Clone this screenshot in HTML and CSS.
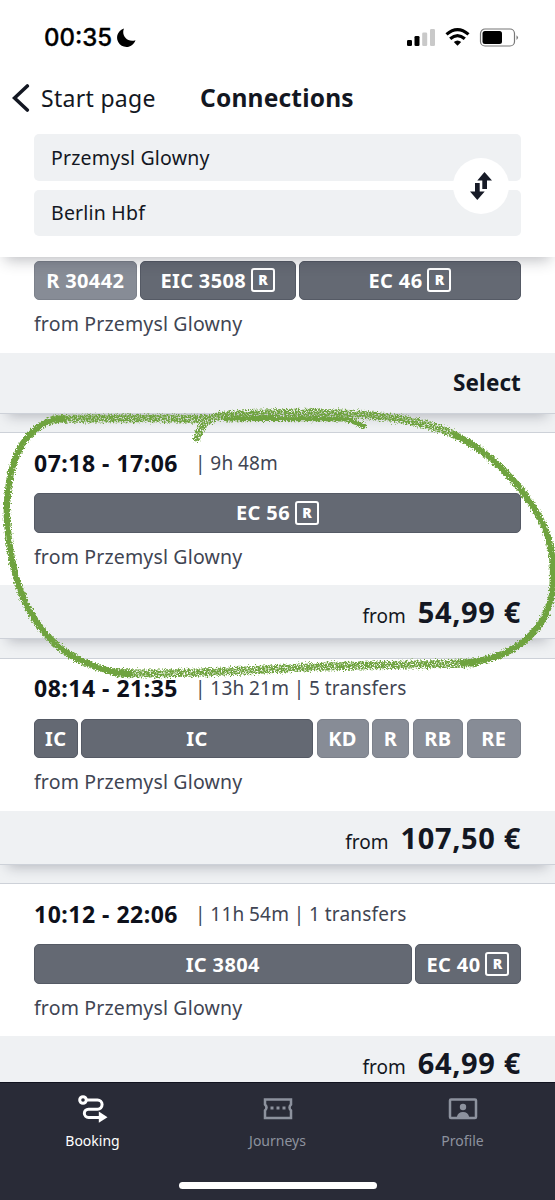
FILE: index.html
```html
<!DOCTYPE html>
<html lang="en">
<head>
<meta charset="utf-8">
<title>Connections</title>
<link rel="stylesheet" href="styles.css">
</head>
<body>
<div class="screen">
  <header class="header">
    <div class="status">
      <span class="clock">00:35</span>
      <svg class="moon" width="19" height="19" viewBox="0 0 19 19"><path d="M7 .5C4 7 10 15 18.500 12.200A9.400 9.400 0 1 1 7 .5Z"/></svg>
      <svg class="indicators" width="112" height="20" viewBox="0 0 112 20">
        <rect x="0" y="12" width="5" height="6" rx="1.300"/><rect x="7.500" y="8" width="5" height="10" rx="1.300"/>
        <rect class="dim" x="15.200" y="4.500" width="5" height="13.500" rx="1.300"/><rect class="dim" x="23" y="1" width="5" height="17" rx="1.300"/>
        <g class="arcs"><path d="M39.500 6.400Q50.500 -3 61.500 6.400"/><path d="M43.200 10.800Q50.500 4.500 57.800 10.800"/></g>
        <path d="M50.500 17.800L46.800 14Q50.500 10.800 54.200 14Z"/>
        <rect class="case" x="73.500" y="1" width="34" height="17" rx="4.500"/><rect x="75.500" y="3" width="19.500" height="13" rx="2.500"/>
        <path class="tip" d="M109.500 7.200Q112.500 9.500 109.500 12Z"/>
      </svg>
    </div>
    <div class="titlebar">
      <svg class="back" width="18" height="28" viewBox="0 0 18 28"><path d="M15.300 2L2.500 14L15.300 26"/></svg>
      <span class="start">Start page</span>
      <h1 class="title">Connections</h1>
    </div>
    <div class="route">
      <div class="field"><span>Przemysl Glowny</span></div>
      <div class="field"><span>Berlin Hbf</span></div>
      <div class="swap"><svg width="22" height="28" viewBox="0 0 22 28"><path d="M14.500 0L22 8.500H17V17H12.300V8.500H7.300ZM5 11H9.700V19.500H14.700L7.300 28L0 19.500H5Z"/></svg></div>
    </div>
  </header>
  <main class="list">
    <section class="card first">
      <div class="segments s1"><div class="seg light">R 30442</div><div class="seg">EIC 3508<b class="res">R</b></div><div class="seg">EC 46<b class="res">R</b></div></div>
      <p class="origin">from Przemysl Glowny</p>
      <div class="footer tall"><span class="select">Select</span></div>
    </section>
    <section class="card">
      <div class="times"><strong>07:18 - 17:06</strong><span>| 9h 48m</span></div>
      <div class="segments s2"><div class="seg">EC 56<b class="res">R</b></div></div>
      <p class="origin">from Przemysl Glowny</p>
      <div class="footer"><span class="from">from</span><span class="price">54,99 €</span></div>
    </section>
    <section class="card">
      <div class="times"><strong>08:14 - 21:35</strong><span>| 13h 21m | 5 transfers</span></div>
      <div class="segments s3"><div class="seg">IC</div><div class="seg">IC</div><div class="seg light">KD</div><div class="seg light">R</div><div class="seg light">RB</div><div class="seg light">RE</div></div>
      <p class="origin">from Przemysl Glowny</p>
      <div class="footer"><span class="from">from</span><span class="price">107,50 €</span></div>
    </section>
    <section class="card">
      <div class="times"><strong>10:12 - 22:06</strong><span>| 11h 54m | 1 transfers</span></div>
      <div class="segments s4"><div class="seg">IC 3804</div><div class="seg">EC 40<b class="res">R</b></div></div>
      <p class="origin">from Przemysl Glowny</p>
      <div class="footer"><span class="from">from</span><span class="price">64,99 €</span></div>
    </section>
  </main>
  <nav class="nav">
    <div class="tabs">
      <div class="tab active"><svg width="30" height="28" viewBox="0 0 30 28"><circle cx="5" cy="5" r="3.300"/><path d="M8.500 5H19.500A4.600 4.600 0 0 1 19.500 14.200H10.500A4 4 0 0 0 10.500 22.500H21"/><path class="solid" d="M20.800 16.500L29.500 22.200L20.800 27.800Z"/></svg><span>Booking</span></div>
      <div class="tab"><svg width="30" height="28" viewBox="0 0 30 28"><path d="M2 4.500H28V9.500Q25 12.500 28 15.500V23H2V15.500Q5 12.500 2 9.500Z"/><path class="dots" d="M7.500 13H10.500M13.500 13H16.500M19.500 13H22.500"/></svg><span>Journeys</span></div>
      <div class="tab"><svg width="30" height="28" viewBox="0 0 30 28"><rect x="2" y="4.500" width="26" height="18.500" rx="1"/><circle class="solid" cx="15" cy="12" r="3.200"/><path class="solid" d="M8.800 22Q10 17 15 17T21.200 22Z"/></svg><span>Profile</span></div>
    </div>
    <div class="home"></div>
  </nav>
  <svg class="marker" width="555" height="1200" viewBox="0 0 555 1200">
    <defs><filter id="crayon" x="-20" y="380" width="600" height="320" filterUnits="userSpaceOnUse" color-interpolation-filters="sRGB">
      <feTurbulence type="fractalNoise" baseFrequency="0.6" numOctaves="2" seed="4" result="n"/>
      <feDisplacementMap in="SourceGraphic" in2="n" scale="6" xChannelSelector="R" yChannelSelector="G"/>
    </filter>
    <filter id="chalk" x="-20" y="380" width="600" height="320" filterUnits="userSpaceOnUse" color-interpolation-filters="sRGB">
      <feTurbulence type="fractalNoise" baseFrequency="0.7" numOctaves="2" seed="9" result="n"/>
      <feDisplacementMap in="SourceGraphic" in2="n" scale="7" xChannelSelector="R" yChannelSelector="G" result="d"/>
      <feColorMatrix in="n" type="matrix" values="0 0 0 0 0  0 0 0 0 0  0 0 0 0 0  0 0 4 0 -1.1" result="m"/>
      <feComposite in="d" in2="m" operator="in"/>
    </filter></defs>
    <g filter="url(#chalk)">
      <path class="soft" d="M197 438C201 424 208 416 228 415C280 412 330 412 365 415C405 418 432 424 455 435"/>
      <path class="soft" d="M475 663C430 665 350 664 275 669C225 671 175 675 120 673"/>
      <path class="soft" d="M55 419C110 418 160 418 212 419"/>
    </g>
    <g filter="url(#crayon)">
      <path class="firm" d="M455 435C489 451 520 483 540 518C555 546 554 573 552 595C547 620 531 641 505 653C490 660 475 662 463 663"/>
      <path class="firm" d="M130 674C105 673 78 661 60 648C25 618 11 578 7 520C6 480 14 447 35 430C45 421 54 419 63 418.500"/>
      <path class="thin" d="M225 419C265 418 320 419 347 419L364 426"/>
    </g>
  </svg>
</div>
</body>
</html>
```
FILE: styles.css
```css
* { box-sizing: border-box; }
body { margin: 0; font-family: "Noto Sans", sans-serif; color: #131722; background: #fff; }
.screen { position: relative; width: 555px; height: 1200px; overflow: hidden; display: flex; flex-direction: column; }
.header { flex: 0 0 257px; background: #fff; position: relative; z-index: 2; padding: 0 34px; box-shadow: 0 8px 14px -5px rgba(30, 34, 45, .3); }
.status { height: 72px; padding: 3px 0 0 10px; display: flex; align-items: center; }
.clock { font: 500 24px/30px Inter, sans-serif; -webkit-text-stroke: .3px #000; color: #000; width: 69px; white-space: nowrap; }
.moon { margin-left: 4px; }
.indicators { margin-left: auto; margin-right: 2px; }
.indicators .dim { fill: #c9c9c9; }
.arcs { fill: none; stroke: #000; stroke-width: 3.200; }
.indicators .case { fill: none; stroke: #777; stroke-width: 1.2; }
.indicators .tip { fill: #777; }
.titlebar { height: 62px; display: flex; align-items: center; margin-left: -22px; padding-bottom: 11px; white-space: nowrap; }
.back path { fill: none; stroke: #131722; stroke-width: 3.6; stroke-linecap: round; }
.start { margin-left: 11px; width: 159px; font-size: 23px; letter-spacing: .3px; }
.title { margin: 0; font-size: 24.500px; font-weight: 700; letter-spacing: .2px; }
.route { position: relative; display: grid; gap: 9px; grid-auto-rows: 46.5px; }
.field { background: #eff1f3; border-radius: 5px; padding-left: 17px; display: flex; align-items: center; font-size: 19.5px; letter-spacing: .2px; }
.swap { position: absolute; right: 12px; top: 24px; width: 56px; height: 56px; border-radius: 50%; background: #fff; display: flex; align-items: center; justify-content: center; }
.swap svg { fill: #171b27; }
.list { flex: 1; min-height: 0; overflow: hidden; background: #eff1f3; display: flex; flex-direction: column; gap: 18.600px; }
.card { flex: 0 0 207px; background: #fff; border-top: 1px solid #cdd1d8; border-bottom: 1px solid #cdd1d8; box-shadow: 0 10px 12px -8px rgba(30, 34, 50, .28); display: flex; flex-direction: column; }
.first { flex-basis: 156.500px; border-top: 0; padding-top: 3.500px; }
.times { height: 60px; padding: 0 34px 1px; display: flex; align-items: center; white-space: nowrap; }
.times strong { font-size: 23px; letter-spacing: .5px; width: 161px; color: #0d101b; }
.times span { font-size: 19px; letter-spacing: .2px; word-spacing: -.5px; color: #3f4553; }
.segments { height: 39.500px; margin: 0 34px; display: grid; gap: 3.500px; }
.s1 { grid-template-columns: 102.500px 155.500px 1fr; }
.s3 { grid-template-columns: 43.500px 232px 52px 37px 50.500px 1fr; }
.s4 { grid-template-columns: 377.500px 1fr; }
.seg { background: #646973; border: 1px solid #555a65; border-radius: 5px; color: #fff; font-weight: 700; font-size: 20px; letter-spacing: .35px; display: flex; align-items: center; justify-content: center; white-space: nowrap; }
.light { background: #878c96; border-color: #7c818b; }
.res { margin-left: 5px; width: 24px; height: 24px; border: 2.500px solid #fff; border-radius: 3px; font-size: 14px; line-height: 19px; text-align: center; letter-spacing: 0; }
.origin { margin: 0 0 0 34px; height: 52.500px; line-height: 48px; font-size: 19.500px; letter-spacing: .16px; color: #3f4553; white-space: nowrap; }
.footer { flex: 1; background: #eff1f3; display: flex; align-items: baseline; justify-content: flex-end; padding: 7px 34px 0; line-height: 39px; white-space: nowrap; }
.tall { padding-top: 10.500px; }
.select { font-size: 22.500px; font-weight: 700; letter-spacing: .1px; }
.from { font-size: 19px; margin-right: 12px; }
.price { font-size: 29px; font-weight: 700; letter-spacing: .65px; }
.nav { flex: 0 0 118px; background: #292b37; border-top: 1px solid #11131f; display: flex; flex-direction: column; align-items: center; position: relative; }
.tabs { width: 100%; padding-top: 12px; display: grid; grid-template-columns: repeat(3, 1fr); }
.tab { display: flex; flex-direction: column; align-items: center; font-size: 14px; line-height: 20px; color: #8d929e; gap: 8px; }
.tab svg { fill: none; stroke: #8d929e; stroke-width: 2.5; }
.tab .solid { fill: #8d929e; stroke: none; }
.tab .dots { stroke-width: 3; }
.active { color: #fff; }
.active svg { stroke: #fff; stroke-width: 3; }
.active .solid { fill: #fff; }
.home { width: 198px; height: 7px; border-radius: 4px; background: #fff; margin-top: 31px; }
.marker { position: absolute; left: 0; top: 0; z-index: 3; pointer-events: none; fill: none; stroke: #6fa33f; stroke-linecap: round; stroke-linejoin: round; }
.firm { stroke-width: 6.5; }
.thin { stroke-width: 5; }
.soft { stroke-width: 8; }
```
